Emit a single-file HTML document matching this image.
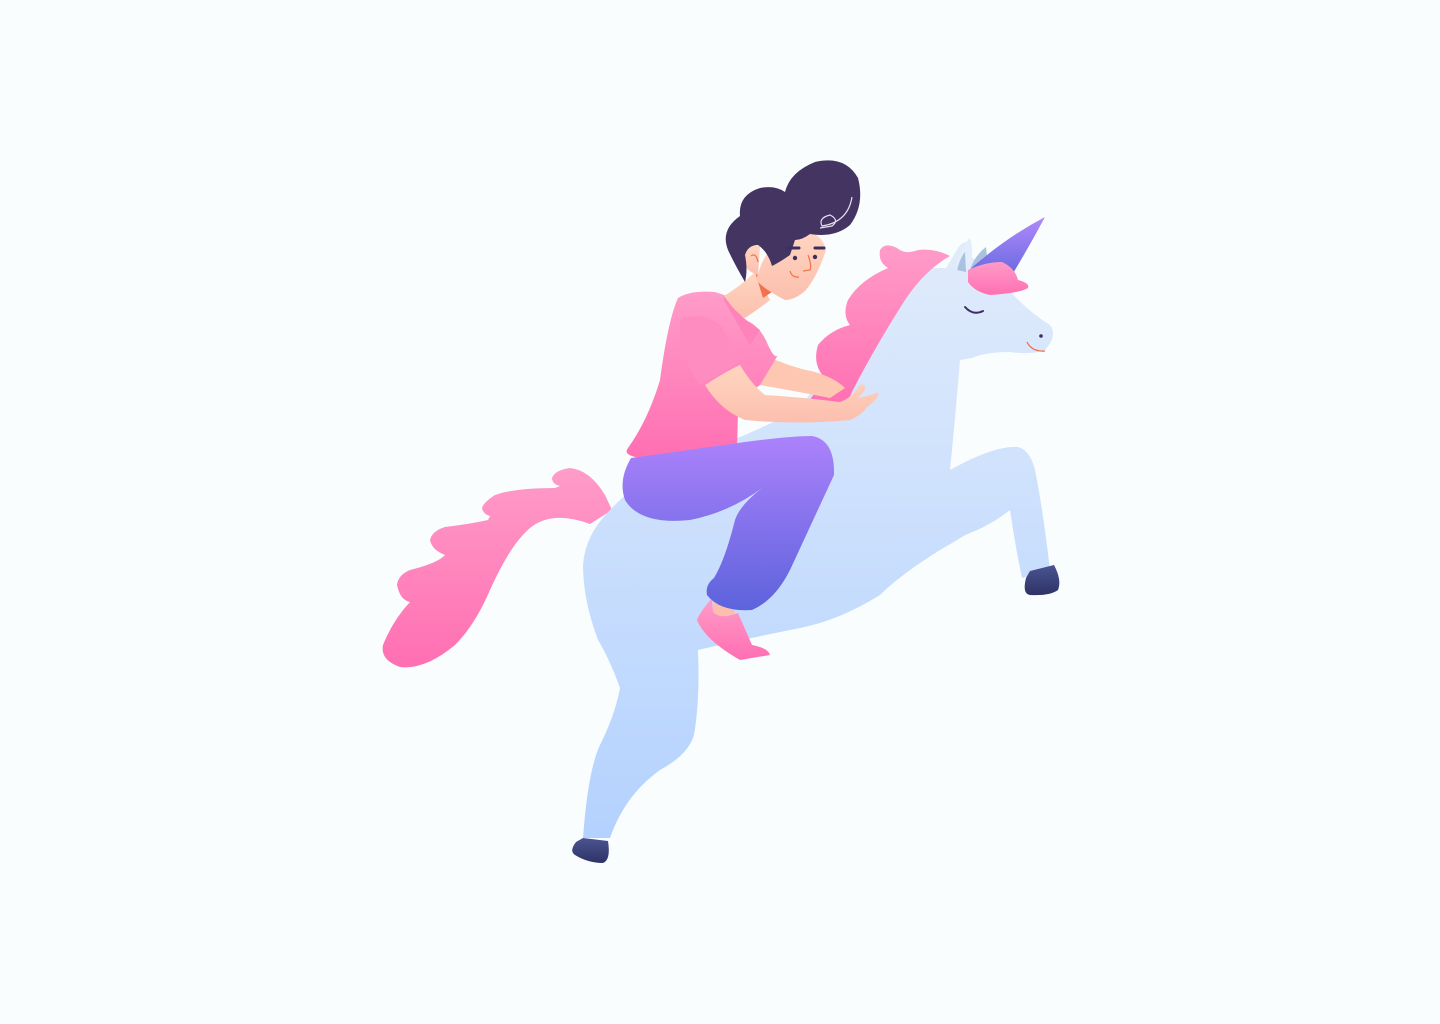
<!DOCTYPE html>
<html><head><meta charset="utf-8"><style>
html,body{margin:0;padding:0;background:#f9fdfe;width:1440px;height:1024px;overflow:hidden}
svg{display:block}
</style></head><body>
<svg width="1440" height="1024" viewBox="0 0 1440 1024" xmlns="http://www.w3.org/2000/svg">
<defs>
<linearGradient id="uni" gradientUnits="userSpaceOnUse" x1="0" y1="250" x2="0" y2="860"><stop offset="0" stop-color="#e0ebfb"/><stop offset="1" stop-color="#b2d1ff"/></linearGradient>
<linearGradient id="pink" x1="0" y1="0" x2="0" y2="1"><stop offset="0" stop-color="#ff9cc8"/><stop offset="1" stop-color="#ff6fb2"/></linearGradient>
<linearGradient id="pants" x1="0" y1="0" x2="0" y2="1"><stop offset="0" stop-color="#ac82fc"/><stop offset="1" stop-color="#5d63dc"/></linearGradient>
<linearGradient id="horn" x1="0" y1="0" x2="0" y2="1"><stop offset="0" stop-color="#b08afc"/><stop offset="1" stop-color="#6a6ae0"/></linearGradient>
<linearGradient id="hoof" x1="0" y1="0" x2="0" y2="1"><stop offset="0" stop-color="#4a5490"/><stop offset="1" stop-color="#2e3366"/></linearGradient>
<linearGradient id="skin" x1="0" y1="0" x2="0" y2="1"><stop offset="0" stop-color="#ffd6c0"/><stop offset="1" stop-color="#fcbfae"/></linearGradient>
</defs>
<path fill="url(#pink)" d="M612 510 L605 495 Q590 470 570 468 Q555 470 552 478 Q552 484 560 486 L555 488 Q515 488 495 495 Q484 502 482 508 Q483 514 490 516 L488 520 Q470 524 445 527 Q432 531 430 540 Q432 550 445 555 Q438 563 410 570 Q398 575 397 585 Q400 600 410 602 Q393 620 383 645 Q380 660 400 667 Q425 670 455 645 Q475 625 490 590 Q510 545 530 528 Q552 510 590 524 Z"/>
<path fill="url(#uni)" d="M950 470 Q995 445 1018 447 Q1030 450 1035 470 Q1043 510 1050 570 L1022 578 Q1015 545 1010 510 Q985 530 950 540 Z"/>
<path fill="url(#uni)" d="M946 268 L958 248 Q965 238 970 245 L972 258 Q985 262 1000 280 Q1025 310 1050 325 Q1058 335 1045 350 Q1032 355 1010 352 Q985 352 972 358 L960 360 Q955 420 950 470 L955 530 Q1010 510 940 550 Q900 575 880 595 Q840 620 800 628 Q740 640 698 650 Q700 700 694 735 Q688 755 660 770 Q625 795 610 838 L583 838 Q588 770 600 745 Q615 715 620 688 Q610 660 598 640 Q583 600 583 565 Q585 535 610 510 Q640 478 680 460 Q720 445 745 435 L800 410 Q830 360 860 320 Q890 280 920 268 Z"/>
<path fill="url(#hoof)" d="M583 838 L608 841 Q611 860 603 863 Q588 863 575 855 Q569 851 576 842 Z"/>
<path fill="url(#hoof)" d="M1030 571 L1054 565 Q1062 580 1058 590 Q1050 596 1030 595 Q1022 594 1026 578 Z"/>
<path fill="#e3eefc" d="M955 270 Q962 245 970 238 Q974 250 970 268 Z"/>
<path fill="#aac1df" d="M957 270 Q960 258 965 252 L966 272 Z"/>
<path fill="#aac1df" d="M970 270 Q975 255 986 247 L988 265 Z"/>
<path fill="url(#horn)" d="M968 271 Q1005 238 1045 217 Q1030 245 1012 275 Z"/>
<path fill="url(#pink)" d="M968 270 Q985 262 1002 262 Q1015 268 1018 280 Q1030 283 1028 288 Q1020 293 990 295 Q975 292 968 282 Z"/>
<path fill="url(#pink)" d="M950 256 Q935 248 918 250 Q905 255 897 248 Q885 242 880 250 Q878 262 888 268 Q860 280 848 300 Q842 315 850 325 Q830 330 818 345 Q812 365 825 378 L830 385 Q815 390 810 400 Q815 408 835 408 L848 400 Q870 355 905 300 Q925 270 950 256 Z"/>
<path d="M965 307 Q973 316 983 311" stroke="#3a3060" stroke-width="2" fill="none" stroke-linecap="round"/>
<circle cx="1041" cy="336" r="1.8" fill="#3a3060"/>
<path d="M1027 342 Q1032 352 1045 351" stroke="#f06a50" stroke-width="1.3" fill="none"/>
<path fill="#fdc7b1" d="M745 345 Q780 365 815 372 Q835 378 845 388 L830 398 Q800 392 760 385 Z"/>
<path fill="url(#pink)" d="M628 448 Q648 420 660 380 Q668 320 678 298 Q690 290 715 292 L724 295 L745 320 Q760 325 768 345 Q775 360 778 355 L760 385 Q745 395 738 410 L737 452 Q690 458 640 458 Q622 455 628 448 Z"/>
<path fill="#ff82bb" d="M724 295 Q740 318 760 330 L750 345 Q738 325 724 300 Z"/>
<path fill="url(#skin)" d="M724 296 Q742 285 755 272 L770 300 Q760 308 745 318 Q735 312 724 296 Z"/>
<path fill="#f0734d" d="M755 272 L763 298 L772 292 Z"/>
<path fill="#ff8cc0" d="M680 320 Q700 310 720 325 Q735 345 740 360 Q720 375 700 385 Q685 365 680 340 Z"/>
<path fill="url(#skin)" d="M705 385 Q725 372 740 365 Q752 385 765 395 Q800 397 840 402 Q852 398 860 385 Q865 382 865 390 L858 398 Q872 395 878 392 Q880 398 868 406 Q862 415 850 420 Q800 425 745 420 Q720 410 705 385 Z"/>
<path fill="url(#skin)" d="M760 268 Q770 240 800 230 Q822 232 826 250 Q818 275 806 290 Q795 300 785 300 Q765 290 756 280 Z"/>
<path fill="url(#skin)" d="M758 275 Q742 270 742 255 Q745 243 760 246 Z"/>
<path fill="#433462" d="M745 282 Q735 265 728 250 Q720 230 740 216 Q738 195 760 188 Q775 185 785 192 Q790 172 815 162 Q845 155 858 178 Q865 205 850 225 Q835 238 810 234 Q802 240 795 240 L790 255 Q780 262 772 266 Q768 252 758 245 Q748 245 745 255 Q748 270 745 282 Z"/>
<path d="M852 197 Q848 222 822 226 Q818 218 830 215 Q840 220 832 226 L820 228" stroke="#e8e0f0" stroke-width="1.2" fill="none"/>
<path d="M751 256 Q756 252 758 262" stroke="#f0734d" stroke-width="1.2" fill="none"/>
<path d="M787 248 L799 248 M815 248 L824 248" stroke="#3a3060" stroke-width="3" stroke-linecap="round"/>
<circle cx="795" cy="258" r="2.2" fill="#3a3060"/><circle cx="815" cy="257" r="2.2" fill="#3a3060"/>
<path d="M808 255 Q812 266 810 270 L803 271" stroke="#f0734d" stroke-width="1.2" fill="none"/>
<path d="M790 271 Q792 278 799 277" stroke="#f0734d" stroke-width="1.2" fill="none"/>
<path fill="#fcbfae" d="M714 600 L712 615 Q720 622 735 615 L732 600 Z"/>
<path fill="url(#pink)" d="M712 598 Q700 612 697 620 Q705 640 740 660 L770 655 Q768 648 752 645 L738 613 Q720 620 713 612 Z"/>
<path fill="url(#pants)" d="M631 458 L745 442 Q790 436 812 436 Q835 440 834 475 L790 570 Q775 600 752 610 Q720 612 707 595 Q705 585 714 578 Q725 560 735 520 Q740 505 762 488 Q730 512 690 520 Q640 525 625 500 Q618 480 631 458 Z"/>
</svg>
</body></html>
